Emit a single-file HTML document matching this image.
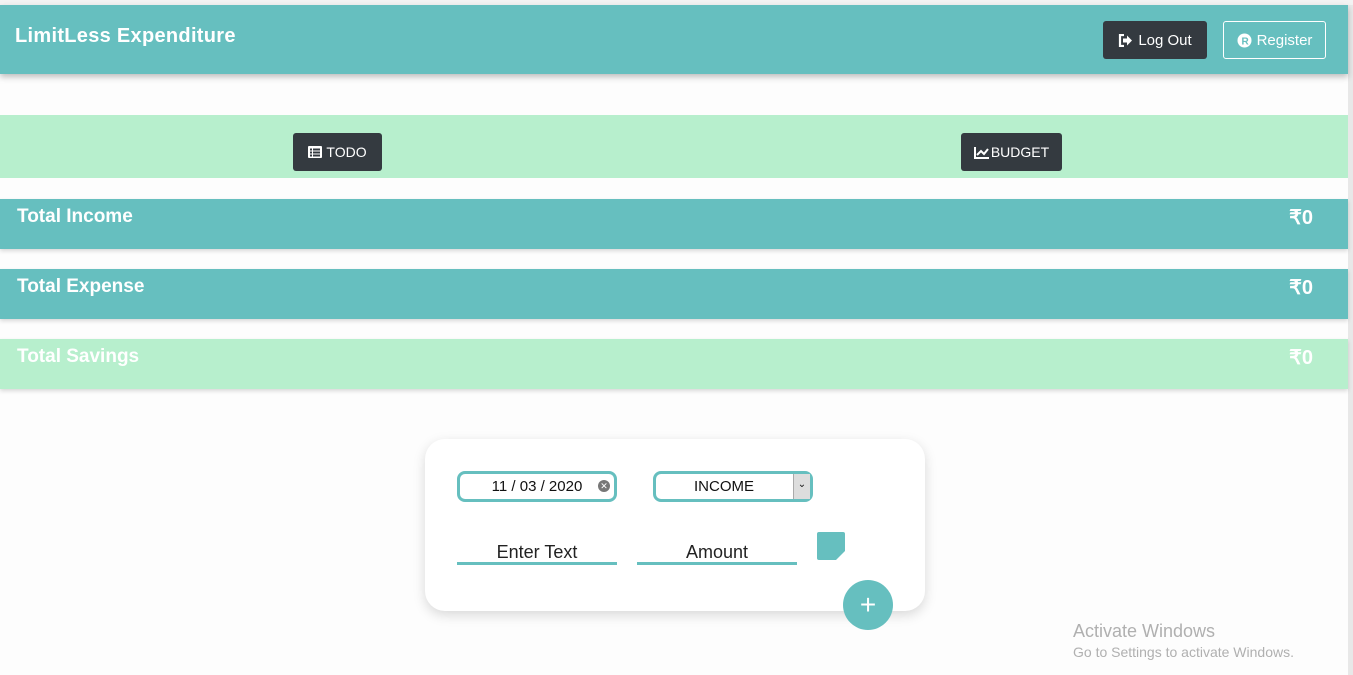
<!DOCTYPE html>
<html><head><style>
body{margin:0;width:1353px;height:675px;overflow:hidden;background:#fdfdfd;font-family:"Liberation Sans",sans-serif;position:relative}
.top{position:absolute;left:0;top:0;width:1353px;height:5px;background:#f3f3f3}
.hdr{position:absolute;left:0;top:5px;width:1348px;height:69px;background:#66bfbf;box-shadow:0 3px 6px rgba(0,0,0,.25)}
.title{position:absolute;left:15px;top:20px;color:#fff;font-size:20px;font-weight:bold;letter-spacing:.3px}
.btn{position:absolute;font-size:15px;color:#fff;border-radius:3px;box-sizing:border-box;display:flex;align-items:center;justify-content:center;gap:5px}
.dark{background:#343a40}
.band{position:absolute;left:0;width:1348px}
.bar{position:absolute;left:0;width:1348px;height:50px;color:#fff;font-size:19px;font-weight:bold;box-shadow:0 2px 4px rgba(0,0,0,.15)}
.bar span{position:absolute;left:17px;top:7px}
.bar b{position:absolute;right:35px;top:6px;font-size:20px}
.card{position:absolute;left:425px;top:439px;width:500px;height:172px;background:#fff;border-radius:20px;box-shadow:0 4px 12px rgba(0,0,0,.15)}
.inp{position:absolute;border:3px solid #66bfbf;border-radius:8px;box-sizing:border-box;font-size:15px;color:#111;text-align:center;line-height:25px;height:31px}
.line{position:absolute;border-bottom:3px solid #66bfbf;width:160px;height:26px;text-align:center;font-size:18px;color:#222;box-sizing:border-box;line-height:26px}
.scroll{position:absolute;left:1348px;top:5px;width:5px;height:670px;background:#e8e8e8}
.win{position:absolute;left:1073px;top:621px;color:#b0b0b0}
</style></head><body>
<div class="top"></div>
<div class="scroll"></div>
<div class="hdr"><div class="title">LimitLess Expenditure</div>
<div class="btn dark" style="left:1103px;top:16px;width:104px;height:38px"><svg width="15" height="13" viewBox="0 0 15 13"><path d="M6 1H2v11h4" stroke="#fff" stroke-width="2.2" fill="none"/><path d="M5 4.5h4V1.5l5 5-5 5v-3H5z" fill="#fff"/></svg>Log Out</div>
<div class="btn" style="left:1223px;top:16px;width:103px;height:38px;border:1px solid #fff"><svg width="15" height="15"><circle cx="7.5" cy="7.5" r="7" fill="#fff"/><text x="4.5" y="11.5" font-size="10" font-weight="bold" fill="#66bfbf" font-family="Liberation Sans">R</text></svg>Register</div>
</div>
<div class="band" style="top:115px;height:63px;background:#b7efcd"></div>
<div class="btn dark" style="left:293px;top:133px;width:89px;height:38px;font-size:14px;gap:4px"><svg width="14" height="12"><rect width="14" height="12" rx="1" fill="#fff"/><g fill="#343a40"><rect x="2" y="2.5" width="2" height="2"/><rect x="2" y="5.5" width="2" height="2"/><rect x="2" y="8.5" width="2" height="2"/><rect x="5" y="2.5" width="7" height="2"/><rect x="5" y="5.5" width="7" height="2"/><rect x="5" y="8.5" width="7" height="2"/></g></svg>TODO</div>
<div class="btn dark" style="left:961px;top:133px;width:101px;height:38px;font-size:14px;gap:1px"><svg width="16" height="13"><path d="M1 1v11h14" stroke="#fff" stroke-width="2" fill="none"/><path d="M3 9l4-4 3 3 4-5" stroke="#fff" stroke-width="2" fill="none"/></svg>BUDGET</div>
<div class="bar" style="top:199px;background:#66bfbf"><span>Total Income</span><b>₹0</b></div>
<div class="bar" style="top:269px;background:#66bfbf"><span>Total Expense</span><b>₹0</b></div>
<div class="bar" style="top:339px;background:#b7efcd"><span>Total Savings</span><b>₹0</b></div>
<div class="card">
<div class="inp" style="left:32px;top:32px;width:160px">11 / 03 / 2020<span style="position:absolute;right:4px;top:6px;width:12px;height:12px;border-radius:50%;background:#777;color:#fff;font-size:9px;line-height:12px">✕</span></div>
<div class="inp" style="left:228px;top:32px;width:160px;padding-right:18px">INCOME<span style="position:absolute;right:0;top:0;width:16px;height:25px;background:#ddd;border-left:1px solid #aaa;font-size:10px;line-height:22px">⌄</span></div>
<div class="line" style="left:32px;top:100px">Enter Text</div>
<div class="line" style="left:212px;top:100px">Amount</div>
<div style="position:absolute;left:392px;top:93px;width:28px;height:28px;background:#66bfbf;border-radius:2px"><div style="position:absolute;right:0;bottom:0;width:9px;height:9px;background:#fff;clip-path:polygon(100% 0,100% 100%,0 100%)"></div></div>
</div>
<div style="position:absolute;left:843px;top:580px;width:50px;height:50px;border-radius:50%;background:#66bfbf;color:#fff;font-size:28px;text-align:center;line-height:50px">+</div>
<div class="win"><div style="font-size:18px">Activate Windows</div><div style="font-size:14px;margin-top:2px">Go to Settings to activate Windows.</div></div>
</body></html>
